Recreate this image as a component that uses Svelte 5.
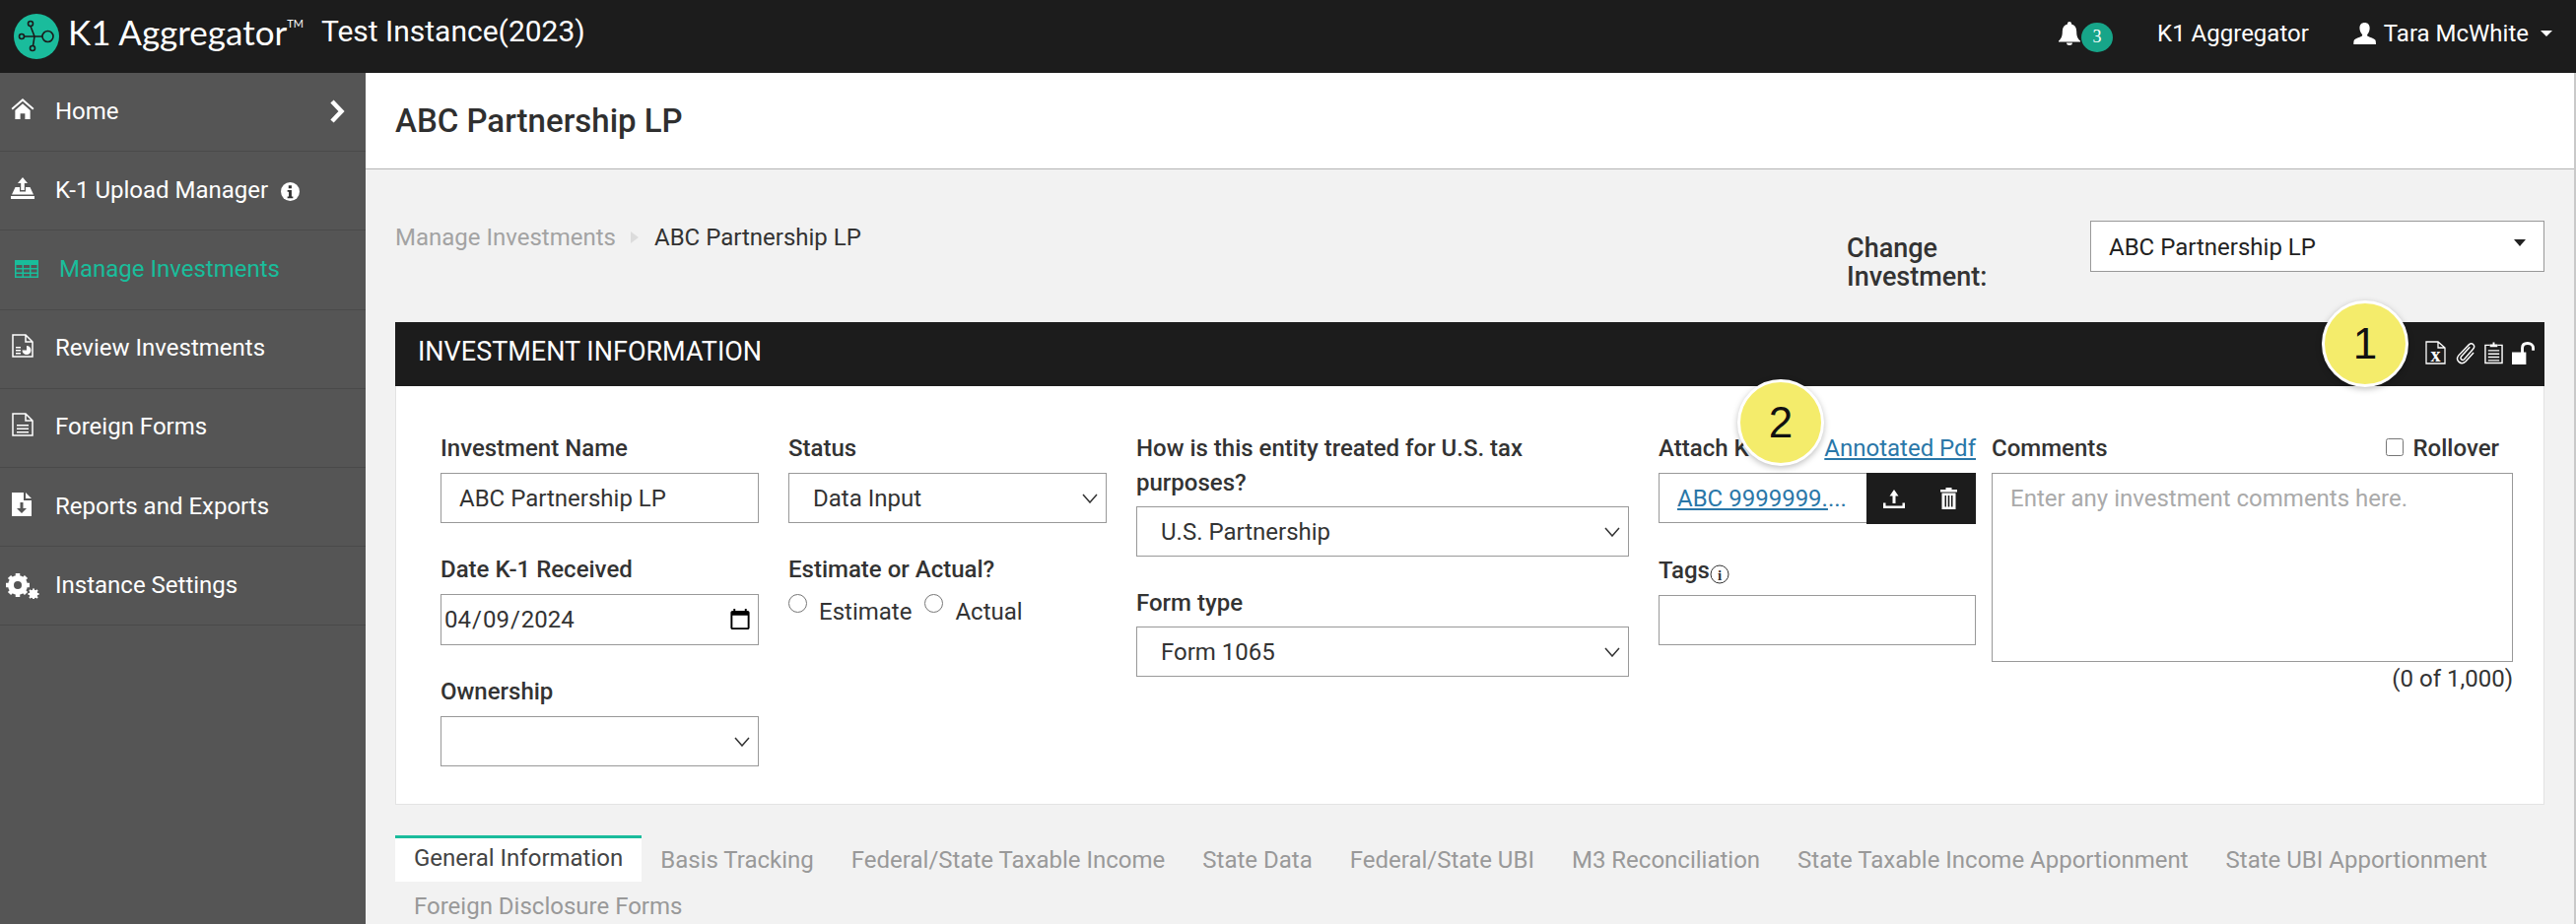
<script>
  const nav = [
    { label: 'Home', icon: 'home', chevron: true },
    { label: 'K-1 Upload Manager', icon: 'upload', info: true },
    { label: 'Manage Investments', icon: 'table', active: true },
    { label: 'Review Investments', icon: 'review' },
    { label: 'Foreign Forms', icon: 'doc' },
    { label: 'Reports and Exports', icon: 'report' },
    { label: 'Instance Settings', icon: 'gears' }
  ];
  const tabs = ['General Information','Basis Tracking','Federal/State Taxable Income','State Data','Federal/State UBI','M3 Reconciliation','State Taxable Income Apportionment','State UBI Apportionment','Foreign Disclosure Forms'];
</script>

<div class="page">
  <header class="topbar">
    <svg class="logo" viewBox="0 0 46 46" width="46" height="46">
      <circle cx="23" cy="23" r="23" fill="#1abc9c"/>
      <g fill="none" stroke="#1b1b1b" stroke-width="1.6">
        <path d="M21 23L17 12.500M21 23H10.500M21 23L19.500 32.500M21 23H29"/>
        <circle cx="17" cy="10" r="2.500"/><circle cx="8" cy="23" r="2.500"/><circle cx="19" cy="35" r="2.500"/><circle cx="34.500" cy="23" r="5.500"/>
      </g>
    </svg>
    <span class="brand">K1 Aggregator<sup>TM</sup></span>
    <span class="instance">Test Instance(2023)</span>
    <div class="topright">
      <svg class="bell" viewBox="0 0 24 24" width="24" height="24"><path fill="#fff" d="M12 0c1.300 0 2 .8 2 2v.6c3.500.9 5.200 3.600 5.200 7.400 0 5 1.200 7.300 3.800 9.500v1H1v-1c2.600-2.200 3.800-4.500 3.800-9.500 0-3.800 1.700-6.500 5.200-7.400V2c0-1.200.7-2 2-2zM9 21.500h6c0 1.700-1.300 2.500-3 2.500s-3-.8-3-2.500z"/></svg>
      <span class="badge">3</span>
      <span class="tlink">K1 Aggregator</span>
      <svg class="user" viewBox="0 0 24 23" width="23" height="22"><path fill="#fff" d="M12 0c3.500 0 5.400 2.300 5.400 5.800 0 2.600-1 5-2.300 6.500-.6.700-.5 1.700.4 2.200 2.500 1.300 6.500 2.300 7.800 3.900.5.600.7 2.800.7 4.600H.3c0-1.800.2-4 .7-4.600 1.300-1.600 5.300-2.600 7.800-3.900.9-.5 1-1.500.4-2.200C7.900 10.800 6.700 8.400 6.700 5.800 6.700 2.300 8.500 0 12 0z"/></svg>
      <span class="tname">Tara McWhite</span>
      <span class="caret"></span>
    </div>
  </header>

  <div class="shell">
    <nav class="side">
      {#each nav as n}
        <div class="nav" class:active={n.active}>
          <span class="nicon">
            {#if n.icon === 'home'}
              <svg viewBox="0 0 24 22" width="24" height="21"><path fill="#fff" d="M12 0l12 10.500-1.300 1.500L12 2.800 1.300 12 0 10.500zM4 12.500l8-7 8 7V22h-5.500v-6h-5v6H4z"/></svg>
            {:else if n.icon === 'upload'}
              <svg viewBox="0 0 24 22" width="24" height="22"><path fill="#fff" d="M12 0l5 6h-3.200v7h-3.600V6H7zM4.500 10H9v4.500h6V10h4.500L23 17.500H1zM0 19h24v3H0z"/></svg>
            {:else if n.icon === 'table'}
              <svg viewBox="0 0 24 18" width="24" height="18"><path fill="#19bd9b" fill-rule="evenodd" d="M0 0h24v18H0zM1.500 5v3h6V5zm7.500 0v3h6V5zm7.500 0v3h6V5zM1.500 9.500v3h6v-3zm7.500 0v3h6v-3zm7.500 0v3h6v-3zM1.500 14v2.500h6V14zM9 14v2.500h6V14zm7.500 0v2.500h6V14z"/></svg>
            {:else if n.icon === 'review'}
              <svg viewBox="0 0 22 24" width="22" height="24"><path fill="none" stroke="#fff" stroke-width="1.500" d="M1 1h13l7 7v15H1zM14 1v7h7"/><path fill="#fff" d="M4 13h5v1.500H4zM4 16h5v1.500H4zM4 19h5v1.500H4zM15 12a4.500 4.500 0 1 1-4.500 4.500H15z"/></svg>
            {:else if n.icon === 'doc'}
              <svg viewBox="0 0 22 24" width="22" height="24"><path fill="none" stroke="#fff" stroke-width="1.500" d="M1 1h13l7 7v15H1zM14 1v7h7"/><path fill="#fff" d="M5 12h12v1.500H5zM5 15.500h12V17H5zM5 19h12v1.500H5z"/></svg>
            {:else if n.icon === 'report'}
              <svg viewBox="0 0 20 24" width="20" height="24"><path fill="#fff" d="M0 0h12v8h8v16H0zM14 0l6 6h-6z"/><path fill="#555" d="M8.500 10h3v6H15l-5 5-5-5h3.500z"/></svg>
            {:else if n.icon === 'gears'}
              <svg viewBox="0 0 34 26" width="34" height="26">
                <circle cx="12" cy="12" r="7.500" fill="none" stroke="#fff" stroke-width="5"/>
                <path stroke="#fff" stroke-width="4.500" d="M12 0v24M0 12h24M3.500 3.500l17 17M20.500 3.500l-17 17"/>
                <circle cx="12" cy="12" r="4" fill="#555"/>
                <circle cx="28" cy="21" r="3" fill="none" stroke="#fff" stroke-width="2.500"/>
                <path stroke="#fff" stroke-width="2" d="M28 15.500v11M22.500 21h11M24 17l8 8M32 17l-8 8"/>
              </svg>
            {/if}
          </span>
          <span class="nlabel">{n.label}</span>
          {#if n.info}
            <svg class="ninfo" viewBox="0 0 20 20" width="19" height="19"><circle cx="10" cy="10" r="10" fill="#fff"/><path fill="#333" d="M8.200 3.500h3.300v3H8.200zM7 8.500h4.500v6.700H13V17H7v-1.800h1.500v-4.900H7z"/></svg>
          {/if}
          {#if n.chevron}
            <svg class="chev" viewBox="0 0 16 24" width="16" height="24"><path fill="none" stroke="#fff" stroke-width="4.500" d="M3 2l9.500 10L3 22"/></svg>
          {/if}
        </div>
      {/each}
    </nav>

    <main class="main">
      <div class="titlebar"><h1>ABC Partnership LP</h1></div>
      <div class="content">
        <div class="crumbrow">
          <div class="crumbs"><span class="c1">Manage Investments</span><span class="ctri"></span><span class="c2">ABC Partnership LP</span></div>
          <div class="change">
            <div class="clabel">Change<br/>Investment:</div>
            <div class="cselect"><span>ABC Partnership LP</span><span class="dcaret"></span></div>
          </div>
        </div>

        <section class="panel">
          <div class="phead">
            <span>INVESTMENT INFORMATION</span>
            <div class="picons">
              <svg viewBox="0 0 21 24" width="21" height="24"><path fill="none" stroke="#fff" stroke-width="1.300" d="M1 1h12l7 6v16H1zM13 1v6h7"/><text x="10.500" y="21" text-anchor="middle" font-family="Liberation Serif" font-weight="700" font-size="20" fill="#fff">x</text></svg>
              <svg viewBox="0 0 22 24" width="21" height="24"><path fill="none" stroke="#fff" stroke-width="1.500" d="M16 6L7 16c-2 2.500 1 5 3 3L19.500 8c3-3.500-1-7.500-4.500-4.500L4 15c-4 5 2.500 11 7.500 6.500L20 12"/></svg>
              <svg viewBox="0 0 20 24" width="19" height="24"><path fill="none" stroke="#fff" stroke-width="1.500" d="M6 4H1v19h18V4h-5"/><path fill="#fff" d="M6 3h3V1h2v2h3v3H6zM4 9h12v1.500H4zM4 12.500h12V14H4zM4 16h12v1.500H4zM4 19.500h12V21H4z"/></svg>
              <svg viewBox="0 0 24 24" width="23" height="23"><path fill="#fff" d="M0 11h15v13H0z"/><path fill="none" stroke="#fff" stroke-width="3" d="M11 12V6.500C11 3.500 13 1.500 16.500 1.500S22.500 3.500 22.500 6.500V9"/></svg>
            </div>
          </div>
          <div class="pbody">
            <div class="col c323 first">
              <div class="field"><div class="lbl">Investment Name</div><input class="ctl" value="ABC Partnership LP"/></div>
              <div class="field"><div class="lbl">Date K-1 Received</div><input class="ctl date" type="date" value="2024-04-09"/></div>
              <div class="field"><div class="lbl">Ownership</div><select class="ctl"><option></option></select></div>
            </div>
            <div class="col c323">
              <div class="field"><div class="lbl">Status</div><select class="ctl"><option>Data Input</option></select></div>
              <div class="field">
                <div class="lbl">Estimate or Actual?</div>
                <div class="radios">
                  <input type="radio" name="e"/><span class="rtext r1">Estimate</span>
                  <input type="radio" name="e"/><span class="rtext">Actual</span>
                </div>
              </div>
            </div>
            <div class="col c500">
              <div class="field"><div class="lbl tight">How is this entity treated for U.S. tax purposes?</div><select class="ctl"><option>U.S. Partnership</option></select></div>
              <div class="field"><div class="lbl tight">Form type</div><select class="ctl"><option>Form 1065</option></select></div>
            </div>
            <div class="col c322">
              <div class="field">
                <div class="lbl split"><span>Attach K-1</span><span class="link">Annotated Pdf</span></div>
                <div class="attach">
                  <div class="afile"><span class="link">ABC 9999999.</span>...</div>
                  <div class="abtns">
                    <svg viewBox="0 0 22 19" width="22" height="19"><path fill="#fff" d="M11 0l4.500 6.500h-3V14h-3V6.500h-3zM0 13.500h2.500v3h17v-3H22V19H0z"/></svg>
                    <svg viewBox="0 0 17 22" width="17" height="22"><path fill="#fff" d="M5.500 0h6v2h5.500v2.500H0V2h5.500zM1.500 5.500h14V22h-14zM4.500 8v11.500H6V8zm3.200 0v11.500h1.600V8zm3.300 0v11.500h1.500V8z"/></svg>
                  </div>
                </div>
              </div>
              <div class="field tags">
                <div class="lbl">Tags<svg class="tinfo" viewBox="0 0 20 20" width="20" height="20"><circle cx="10" cy="10" r="9" fill="none" stroke="#333" stroke-width="1"/><text x="10" y="15.500" text-anchor="middle" font-family="Liberation Serif" font-weight="700" font-size="15" fill="#333">i</text></svg></div>
                <input class="ctl"/>
              </div>
            </div>
            <div class="col c529">
              <div class="lbl split"><span>Comments</span><span class="roll"><input type="checkbox"/>Rollover</span></div>
              <textarea class="ctl area" placeholder="Enter any investment comments here."></textarea>
              <div class="count">(0 of 1,000)</div>
            </div>
          </div>
        </section>

        <div class="tabs">
          {#each tabs as t, i}
            <span class="tab" class:on={i === 0}>{t}</span>
          {/each}
        </div>
      </div>
    </main>
  </div>

  <div class="callout one">1</div>
  <div class="callout two">2</div>
</div>

<style>
  :global(body) { margin: 0; overflow: hidden; }
  .page { width: 2614px; height: 938px; overflow: hidden; font-family: Roboto, sans-serif; font-size: 24px; color: #333; background: #f2f2f2; position: relative; }
  .topbar { height: 74px; background: #1c1c1c; display: flex; align-items: center; color: #fff; box-sizing: border-box; padding-left: 14px; }
  .logo { flex: none; }
  .brand { font-family: Lato, sans-serif; font-size: 35px; margin-left: 9px; white-space: nowrap; line-height: 1; position: relative; top: -5px; width: 257px; }
  .brand sup { font-size: 11px; vertical-align: 18px; line-height: 0; }
  .instance { font-size: 30px; position: relative; top: -6px; }
  .topright { margin-left: auto; display: flex; align-items: center; padding-right: 24px; height: 74px; position: relative; top: -3px; }
  .badge { width: 32px; height: 30px; border-radius: 50%; background: #17a589; font-family: "Liberation Serif", serif; font-size: 18px; color: #fff; display: flex; align-items: center; justify-content: center; margin-top: 3px; position: relative; top: 2px; }
  .tlink { margin-left: 45px; }
  .user { margin-left: 45px; }
  .tname { margin-left: 8px; }
  .caret { border: 6px solid transparent; border-top-color: #fff; border-bottom: 0; margin-left: 12px; }
  .shell { display: flex; height: 864px; }
  .side { width: 371px; flex: none; background: #555; }
  .nav { border-bottom: 1px solid #4a4a4a; display: flex; align-items: center; color: #fff; position: relative; padding-bottom: 2px; box-sizing: content-box; height: 77.2px; }
  .nicon { width: 56px; flex: none; display: flex; justify-content: flex-start; padding-left: 11px; padding-bottom: 4px; box-sizing: border-box; align-items: center; }
  .nav:nth-child(7) .nicon { padding-left: 6px; padding-bottom: 0; padding-top: 2px; }
  .nav:nth-child(3) .nicon { padding-left: 15px; width: 60px; padding-bottom: 0; }
  .nav:nth-child(4) .nicon, .nav:nth-child(5) .nicon, .nav:nth-child(6) .nicon { padding-left: 12px; }
  .nav.active { color: #19bd9b; }
  .ninfo { margin-left: 13px; margin-top: 4px; }
  .chev { margin-left: auto; margin-right: 21px; }
  .main { flex: 1; min-width: 0; border-right: 2px solid #c9c9c9; }
  .titlebar { height: 97px; background: #fff; border-bottom: 1px solid #b5b5b5; box-sizing: content-box; display: flex; align-items: center; padding-left: 30px; }
  h1 { margin: 0; font-size: 33px; font-weight: 500; color: #2f2f2f; }
  .content { padding: 0 30px; }
  .crumbrow { display: flex; justify-content: space-between; height: 155px; box-sizing: border-box; }
  .crumbs { display: flex; align-items: center; height: 35px; margin-top: 51px; }
  .c1 { color: #a3a3a3; }
  .c2 { color: #333; }
  .ctri { border: 6px solid transparent; border-left: 8px solid #dcdcdc; border-right: 0; margin: 0 16px 0 15px; }
  .change { display: flex; width: 708px; justify-content: space-between; padding-top: 52px; }
  .clabel { font-weight: 500; font-size: 27px; line-height: 29px; padding-top: 14px; }
  .cselect { width: 461px; height: 52px; box-sizing: border-box; border: 1px solid #999; background: #fff; display: flex; align-items: center; justify-content: space-between; padding: 1px 18px 0; color: #222; }
  .dcaret { border: 6px solid transparent; border-top: 7px solid #222; border-bottom: 0; margin-bottom: 8px; }
  .panel { background: #fff; border: 1px solid #e3e3e3; border-top: 0; width: 2181px; box-sizing: border-box; }
  .phead { height: 65px; background: #1c1c1c; color: #fff; display: flex; align-items: center; justify-content: space-between; padding: 0 10px 5px 23px; margin: 0 -1px; font-size: 27px; box-sizing: border-box; }
  .picons { display: flex; gap: 9px; align-items: center; margin-top: 2px; }
  .pbody { display: flex; height: 424px; box-sizing: border-box; padding-top: 46px; }
  .col { flex: none; margin-left: 30px; }
  .col.first { margin-left: 45px; }
  .c323 { width: 323px; } .c500 { width: 500px; } .c322 { width: 322px; } .c529 { width: 529px; margin-left: 16px; }
  .field { margin-bottom: 30px; }
  .lbl { font-weight: 500; line-height: 35px; margin-bottom: 7px; color: #333; }
  .lbl.tight { margin-bottom: 6px; }
  .split { display: flex; justify-content: space-between; }
  .link { color: #2a77a8; text-decoration: underline; font-weight: 400; }
  .ctl { display: block; width: 100%; height: 51px; box-sizing: border-box; border: 1px solid #999; background: #fff; font: 24px Roboto, sans-serif; color: #333; padding: 0 18px; border-radius: 0; outline: none; }
  select.ctl { padding-left: 24px; appearance: none; background: #fff url("data:image/svg+xml,%3Csvg xmlns='http://www.w3.org/2000/svg' width='16' height='10'%3E%3Cpath d='M1 1l7 8 7-8' fill='none' stroke='%23333' stroke-width='1.500'/%3E%3C/svg%3E") no-repeat right 8px center; }
  .date { padding: 0 6px 0 2px; height: 52px; }
  .date::-webkit-calendar-picker-indicator { width: 24px; height: 24px; padding: 0; margin: 0; }
  .radios { display: flex; align-items: flex-start; margin-top: -3px; }
  .radios input { width: 19px; height: 19px; margin: 3px 12px 0 0; }
  .rtext { line-height: 34px; margin-top: 4px; }
  .r1 { margin-right: 13px; }
  .attach { display: flex; height: 51px; }
  .afile { flex: 1; border: 1px solid #999; border-right: 0; display: flex; align-items: center; padding-left: 18px; color: #2a77a8; white-space: nowrap; box-sizing: border-box; }
  .abtns { width: 111px; height: 52px; background: #1c1c1c; display: flex; align-items: center; gap: 36px; padding: 0 0 0 17px; box-sizing: border-box; flex: none; }
  .tags { margin-top: 31px; }
  .tinfo { vertical-align: -6px; margin-left: 0; }
  .roll { font-weight: 500; display: flex; align-items: center; margin-right: 14px; }
  .roll input { width: 18px; height: 18px; margin: 0 10px 4px 1px; }
  .area { height: 192px; padding: 11px 18px; resize: none; display: block; }
  .area::placeholder { color: #aaa; }
  .count { text-align: right; line-height: 34px; }
  .tabs { display: flex; flex-wrap: wrap; margin-top: 31px; width: 2181px; }
  .tab { padding: 0 19px; height: 47px; line-height: 50px; color: #999; box-sizing: border-box; white-space: nowrap; }
  .tab.on { background: #fff; color: #444; border-top: 3px solid #1abc9c; line-height: 41px; }
  .callout { position: absolute; width: 88px; height: 88px; box-sizing: border-box; border-radius: 50%; background: #f4ec6b; border: 3px solid #fff; box-shadow: 0 2px 6px rgba(0,0,0,.25); color: #111; font: 44px "Liberation Sans", sans-serif; display: flex; align-items: center; justify-content: center; }
  .one { left: 2356px; top: 305px; }
  .two { left: 1763px; top: 385px; }
</style>
